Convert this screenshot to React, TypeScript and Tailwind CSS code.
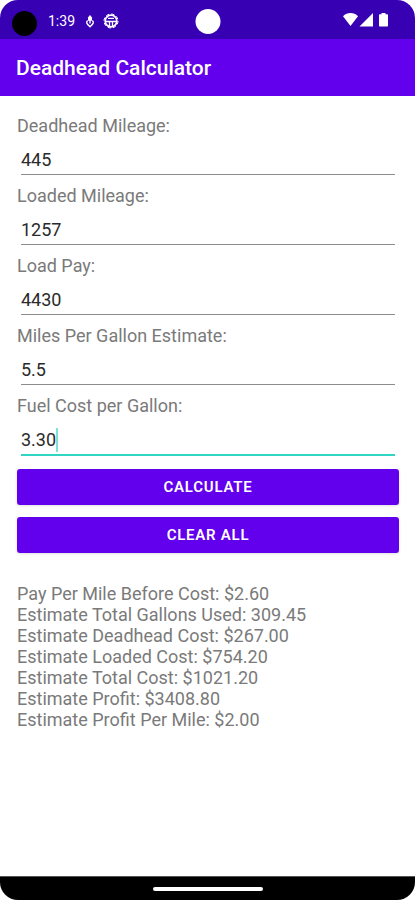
import { useState } from 'react';
import clsx from 'clsx/lite';

const FIELDS = [
  { key: 'deadhead', label: 'Deadhead Mileage:' },
  { key: 'loaded', label: 'Loaded Mileage:' },
  { key: 'pay', label: 'Load Pay:' },
  { key: 'mpg', label: 'Miles Per Gallon Estimate:' },
  { key: 'fuel', label: 'Fuel Cost per Gallon:' },
] as const;

type FieldKey = typeof FIELDS[number]['key'];
type Values = Record<FieldKey, string>;

const INITIAL: Values = {
  deadhead: '445',
  loaded: '1257',
  pay: '4430',
  mpg: '5.5',
  fuel: '3.30',
};

const EMPTY: Values = { deadhead: '', loaded: '', pay: '', mpg: '', fuel: '' };

const calculate = (values: Values) => {
  const deadhead = Number(values.deadhead);
  const loaded = Number(values.loaded);
  const pay = Number(values.pay);
  const mpg = Number(values.mpg);
  const fuel = Number(values.fuel);
  const miles = deadhead + loaded;
  if (!miles || !mpg) { return []; }
  const cost = miles / mpg * fuel;
  return [
    `Pay Per Mile Before Cost: $${(pay / miles).toFixed(2)}`,
    `Estimate Total Gallons Used: ${(miles / mpg).toFixed(2)}`,
    `Estimate Deadhead Cost: $${(deadhead / mpg * fuel).toFixed(2)}`,
    `Estimate Loaded Cost: $${(loaded / mpg * fuel).toFixed(2)}`,
    `Estimate Total Cost: $${cost.toFixed(2)}`,
    `Estimate Profit: $${(pay - cost).toFixed(2)}`,
    `Estimate Profit Per Mile: $${((pay - cost) / miles).toFixed(2)}`,
  ];
};

function StatusBar() {
  return <div className={clsx(
    'relative flex h-[39px] items-center justify-between',
    'bg-[#3700b3] pl-3 pr-[27px] text-white',
  )}>
    <div className="flex items-center">
      <div className="mt-2 size-[25px] rounded-full bg-black" />
      <span className="ml-[11px] mt-0.5 text-sm">1:39</span>
      <svg className="ml-2.5 mt-0.5 h-3.5 w-2.5" viewBox="0 0 10 14" fill="none">
        <path d="M5 1 7 3.400v3.400H3V3.400Z" fill="currentColor" />
        <path d="M5 5.500v4" stroke="currentColor" strokeWidth="1.4" />
        <path
          d="M2.600 6.400C.6 8.400 2 10.200 5 12.800 8 10.200 9.400 8.400 7.400 6.400"
          stroke="currentColor"
          strokeWidth="1.4"
        />
      </svg>
      <svg className="ml-2 mt-0.5 size-4" viewBox="0 0 16 16" fill="none">
        <circle
          cx="8"
          cy="8"
          r="7"
          stroke="currentColor"
          strokeWidth="1"
          strokeDasharray="3.4 2.1"
        />
        <circle cx="8" cy="8" r="5.800" stroke="currentColor" strokeWidth="1.700" />
        <path
          d="M2.500 8.500h11M5 5.300h6M6.500 8.500v4.500M9.500 8.500v4.500"
          stroke="currentColor"
          strokeWidth="1.300"
        />
      </svg>
    </div>
    <div className={clsx(
      'absolute left-1/2 top-[9px] size-[25px] -translate-x-1/2',
      'rounded-full bg-white',
    )} />
    <svg
      className="h-[15px] w-[45px]"
      viewBox="0 0 45 15"
      fill="currentColor"
    >
      <path d="M0 4.300C4-.1 11-.1 15 4.300L7.500 14Z" />
      <path d="M16.500 14.500 30 1v13.500Z" />
      <path d="M38.500 1h4v1.300h1.700q.8 0 .8.800v10.600q0 .8-.8.800h-7.400q-.8 0-.8-.8V3.100q0-.8.8-.8h1.700Z" />
    </svg>
  </div>;
}

function Field({
  id,
  label,
  value,
  active,
  onChange,
  onFocus,
}: {
  id: string
  label: string
  value: string
  active: boolean
  onChange: (value: string) => void
  onFocus: () => void
}) {
  return <div className="flex h-[70px] flex-col">
    <label htmlFor={id} className="leading-[21px] text-[#7a7a7a]">
      {label}
    </label>
    <div className="relative mx-1">
      <input
        id={id}
        inputMode="decimal"
        value={value}
        onChange={e => onChange(e.target.value)}
        onFocus={onFocus}
        className={clsx(
          'block w-full pt-3 pb-1 text-[#2a2a2a]',
          'caret-transparent outline-none',
          active
            ? 'h-10 border-b-2 border-[#30d5c4]'
            : 'h-[39px] border-b border-[#8c8c8c]',
        )}
      />
      {active &&
        <span
          className="absolute bottom-1 h-6 w-0.5 bg-[#7fe3d3]"
          style={{ left: `${value.replace('.', '').length * 10 + 5}px` }}
        />}
    </div>
  </div>;
}

const BUTTON = clsx(
  'h-9 w-full rounded-[3px] bg-[#6200ee] pt-0.5 shadow-sm',
  'text-[15px] font-semibold tracking-wider text-white uppercase',
);

export default function App() {
  const [values, setValues] = useState(INITIAL);
  const [active, setActive] = useState<FieldKey>('fuel');
  const [results, setResults] = useState(() => calculate(INITIAL));

  const clearAll = () => {
    setValues(EMPTY);
    setResults([]);
  };

  return <div className={clsx(
    'flex min-h-screen flex-col overflow-hidden rounded-[18px] bg-white',
    'font-[Roboto,sans-serif] text-lg',
  )}>
    <StatusBar />
    <header className="flex h-[57px] items-center bg-[#6200ee] px-4 pt-0.5">
      <h1 className="text-[21px] font-medium text-white">
        Deadhead Calculator
      </h1>
    </header>
    <main className="grow pt-[19px] pr-4 pb-8 pl-[17px]">
      <form onSubmit={e => {
        e.preventDefault();
        setResults(calculate(values));
      }}>
        {FIELDS.map(({ key, label }) =>
          <Field
            key={key}
            id={key}
            label={label}
            value={values[key]}
            active={active === key}
            onChange={value => setValues({ ...values, [key]: value })}
            onFocus={() => setActive(key)}
          />)}
        <div className="mt-1 flex flex-col gap-3">
          <button type="submit" className={BUTTON}>Calculate</button>
          <button type="button" className={BUTTON} onClick={clearAll}>
            Clear All
          </button>
        </div>
      </form>
      <div className="mt-[30px] leading-[21px] text-[#7a7a7a]">
        {results.map(line => <p key={line}>{line}</p>)}
      </div>
    </main>
    <footer className={clsx(
      'flex h-6 items-center justify-center',
      'border-t border-[#555] bg-black',
    )}>
      <div className="h-1 w-[110px] rounded-full bg-white" />
    </footer>
  </div>;
}
